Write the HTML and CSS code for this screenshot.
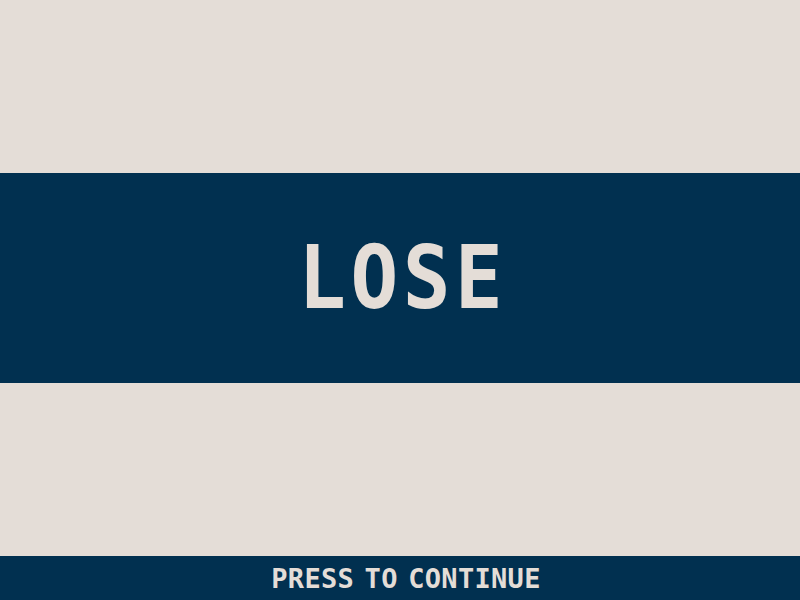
FILE: index.html
```html
<!DOCTYPE html>
<html>
<head>
<meta charset="utf-8">
<link rel="stylesheet" href="styles.css">
</head>
<body>
<div class="screen">
  <div class="spacer top"></div>
  <div class="band"><h1 class="title">LOSE</h1></div>
  <div class="spacer mid"></div>
  <div class="footer"><span class="prompt">PRESS TO CONTINUE</span></div>
</div>
</body>
</html>
```

FILE: styles.css
```css
html, body {
  margin: 0;
  padding: 0;
  background: #e4ddd7;
}
.screen {
  width: 800px;
  height: 600px;
  display: flex;
  flex-direction: column;
  overflow: hidden;
  font-family: "DejaVu Sans Mono", monospace;
  font-weight: bold;
  color: #e4ddd7;
}
.spacer { background: #e4ddd7; }
.top { height: 173px; }
.mid { height: 173px; }
.band {
  height: 210px;
  background: #013050;
  display: flex;
  align-items: center;
  justify-content: center;
}
.title {
  margin: 0;
  font-size: 88px;
  line-height: 1;
  font-weight: bold;
  letter-spacing: 5px;
  padding-left: 5px;
  transform: scaleX(0.9);
}
.footer {
  flex: 1;
  background: #013050;
  display: flex;
  align-items: center;
  justify-content: center;
}
.prompt {
  font-size: 27px;
  line-height: 1;
  letter-spacing: 0.3px;
  word-spacing: -6px;
  padding-left: 12px;
}
```
